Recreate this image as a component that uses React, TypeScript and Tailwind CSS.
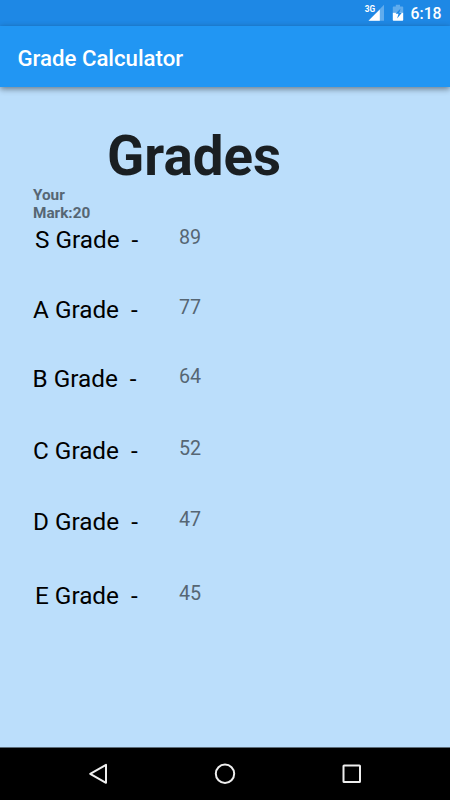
import React from 'react';

interface Grade {
  label: string;
  mark: number;
  rowClass: string;
  labelClass: string;
}

const grades: Grade[] = [
  { label: 'S Grade  -', mark: 89, rowClass: 'h-[70px]', labelClass: 'pl-[35px]' },
  { label: 'A Grade  -', mark: 77, rowClass: 'h-[69px]', labelClass: 'pl-[33px]' },
  { label: 'B Grade  -', mark: 64, rowClass: 'h-[72px]', labelClass: 'pl-[32.5px]' },
  { label: 'C Grade  -', mark: 52, rowClass: 'h-[71px]', labelClass: 'pl-[33px]' },
  { label: 'D Grade  -', mark: 47, rowClass: 'h-[74px]', labelClass: 'pl-[33px]' },
  { label: 'E Grade  -', mark: 45, rowClass: 'h-[70px]', labelClass: 'pl-[35px]' },
];

const StatusBar: React.FC = () => (
  <div className="h-[26px] shrink-0 bg-[#1e88e5] flex text-white">
    <svg width="60" height="26" viewBox="350 0 60 26" className="ml-[350px] shrink-0">
      <text x="364.8" y="12" fontSize="9" fontWeight="700" fill="#fff" textLength="10.4" lengthAdjust="spacingAndGlyphs">3G</text>
      <path d="M384 4.8V20.8H368.5Z" fill="#fff" fillOpacity="0.3" />
      <path d="M379.8 9.4V20.8H368.5Z" fill="#fff" />
      <path d="M395.8 4.8h4.2v1.6h2.4q.8 0 .8.8V12.8h-10.4V7.2q0-.8.8-.8h2.2z" fill="#fff" fillOpacity="0.3" />
      <path d="M392.8 12.8h10.4v7.2q0 .8-.8.8h-8.8q-.8 0-.8-.8z" fill="#fff" />
      <path d="M400.6 8.6l-5 5.2h2.9l-1.4 4.7 4.6-5.6h-2.5z" fill="#1e88e5" />
    </svg>
    <span className="ml-[0.5px] text-[15.8px] leading-[28px] font-medium">6:18</span>
  </div>
);

const NavBar: React.FC = () => (
  <div className="h-[53px] shrink-0 bg-black border-t border-[#5c6c79]">
    <svg width="450" height="52" viewBox="0 748 450 52" fill="none" stroke="#eee" strokeWidth="2">
      <path d="M106 764.8v18L90.2 773.8z" strokeLinejoin="round" />
      <circle cx="225" cy="773.8" r="9.2" />
      <rect x="343.5" y="765.5" width="16.5" height="16.5" rx="0.6" />
    </svg>
  </div>
);

const App: React.FC = () => {
  return (
    <div className="w-[450px] h-[800px] flex flex-col overflow-hidden bg-[#bbdefb] font-['Roboto',sans-serif]">
      <StatusBar />
      <header className="h-[61px] shrink-0 bg-[#2196f3] flex items-center pl-[17.5px] pt-[4px] shadow-[0_2px_6px_rgba(0,0,0,0.45)]">
        <h1 className="text-[22.2px] font-medium text-white">Grade Calculator</h1>
      </header>
      <main className="grow min-h-0 pt-[37px]">
        <h2 className="pl-[107px] h-[62px] text-[54.7px] leading-[64px] font-bold text-[#1a1f22]">Grades</h2>
        <p className="ml-[33px] w-[70px] h-[41px] text-[15.3px] leading-[18px] font-bold text-[#566673]">
          Your Mark:20
        </p>
        {grades.map((grade) => (
          <div key={grade.label} className={`flex items-start ${grade.rowClass}`}>
            <span className={`w-[179px] shrink-0 whitespace-pre text-[24.3px] leading-[26px] text-black ${grade.labelClass}`}>
              {grade.label}
            </span>
            <span className="text-[19.7px] leading-[22px] text-[#566673]">{grade.mark}</span>
          </div>
        ))}
      </main>
      <NavBar />
    </div>
  );
};

export default App;
